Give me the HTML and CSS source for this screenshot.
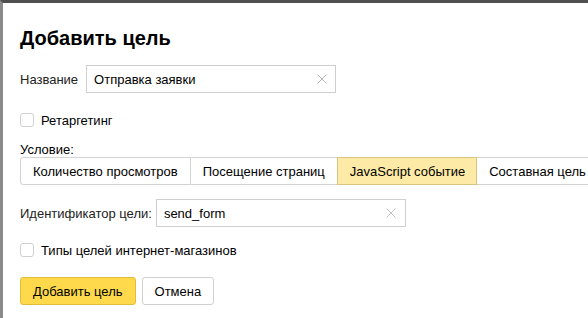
FILE: index.html
```html
<!DOCTYPE html>
<html lang="ru">
<head>
    <meta charset="UTF-8">
    <title>Добавить цель</title>
    <link rel="stylesheet" href="styles.css">
</head>
<body>
<div class="screen">
    <div class="dialog">
        <h1 class="title">Добавить цель</h1>

        <div class="field">
            <label class="label">Название</label>
            <div class="input">
                <span class="value">Отправка заявки</span>
                <span class="clear">
                    <svg width="10" height="10" viewBox="0 0 10 10"><path d="M0.5 0.5L9.5 9.5M9.5 0.5L0.5 9.5" stroke="#b5b5b5" stroke-width="1"/></svg>
                </span>
            </div>
        </div>

        <div class="check check-first">
            <span class="box"></span>
            <span class="check-text">Ретаргетинг</span>
        </div>

        <div class="cond-label">Условие:</div>
        <div class="tabs">
            <div class="tab">Количество просмотров</div>
            <div class="tab">Посещение страниц</div>
            <div class="tab tab-active">JavaScript событие</div>
            <div class="tab">Составная цель</div>
        </div>

        <div class="field field-id">
            <label class="label">Идентификатор цели:</label>
            <div class="input">
                <span class="value">send_form</span>
                <span class="clear">
                    <svg width="10" height="10" viewBox="0 0 10 10"><path d="M0.5 0.5L9.5 9.5M9.5 0.5L0.5 9.5" stroke="#c4c4c4" stroke-width="1"/></svg>
                </span>
            </div>
        </div>

        <div class="check check-second">
            <span class="box"></span>
            <span class="check-text">Типы целей интернет-магазинов</span>
        </div>

        <div class="actions">
            <button class="btn btn-main">Добавить цель</button>
            <button class="btn">Отмена</button>
        </div>
    </div>
</div>
</body>
</html>
```

FILE: styles.css
```css
body {
    margin: 0;
    background-color: #555555;
    font-family: "Liberation Sans", Arial, sans-serif;
    font-size: 13px;
    color: #000000;
}

.screen {
    width: 588px;
    height: 318px;
    overflow: hidden;
    box-sizing: border-box;
    border-top: 3px solid #505050;
    border-left: 3px solid #8a8a8a;
}

.dialog {
    background-color: #FFFFFF;
    height: 100%;
    padding: 23px 0 0 17px;
    box-sizing: border-box;
}

.title {
    margin: 0;
    font-size: 20px;
    line-height: 24px;
    font-weight: bold;
}

.field {
    display: flex;
    align-items: center;
    margin-top: 15px;
}

.field-id {
    margin-top: 14px;
}

.label {
    margin-right: 8px;
    color: #222222;
}

.field-id .label {
    margin-right: 4px;
}

.input {
    width: 250px;
    height: 28px;
    border: 1px solid #cfcfcf;
    box-sizing: border-box;
    display: flex;
    align-items: center;
    justify-content: space-between;
    padding: 0 8px 0 7px;
}

.field-id .input {
    padding-right: 9px;
}

.clear {
    display: flex;
}

.check {
    display: flex;
    align-items: center;
    height: 14px;
}

.check-first {
    margin-top: 20px;
}

.check-second {
    margin-top: 16px;
}

.box {
    width: 12px;
    height: 12px;
    border: 1px solid #d0d0d0;
    border-radius: 3px;
    margin-right: 7px;
}

.cond-label {
    margin-top: 15px;
    line-height: 15px;
}

.tabs {
    display: flex;
    height: 28px;
    white-space: nowrap;
}

.tab {
    flex: none;
    display: flex;
    align-items: center;
    padding: 0 12px;
    border: 1px solid #d3d3d3;
    border-left: none;
    box-sizing: border-box;
}

.tab:first-child {
    border-left: 1px solid #d3d3d3;
    border-radius: 3px 0 0 3px;
}

.tab-active {
    background-color: #fdeaa7;
    border: 1px solid #d9c57e;
    margin-left: -1px;
    padding: 0 11px 0 12px;
}

.actions {
    display: flex;
    margin-top: 20px;
}

.btn {
    height: 28px;
    padding: 0 12px;
    font-family: "Liberation Sans", Arial, sans-serif;
    font-size: 13px;
    color: #000000;
    background-color: #FFFFFF;
    border: 1px solid #d0d0d0;
    border-radius: 3px;
    margin-right: 6px;
}

.btn-main {
    background-color: #fdd94b;
    border-color: #e2bd3c;
    padding: 0 12px;
}
```
